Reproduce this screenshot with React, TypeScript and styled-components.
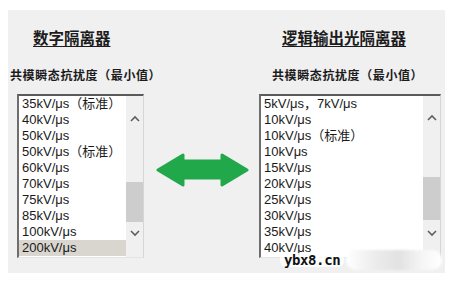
import React from "react";
import styled, { createGlobalStyle } from "styled-components";

const GlobalStyle = createGlobalStyle`
  html, body {
    margin: 0;
    padding: 0;
    background: #ffffff;
  }
  body {
    width: 461px;
    height: 288px;
    overflow: hidden;
    font-family: "Liberation Sans", "Noto Sans CJK SC", sans-serif;
  }
`;

const Page = styled.div`
  padding: 10px 16px 15px 8px;
`;

const Panel = styled.div`
  position: relative;
  display: flex;
  width: 437px;
  height: 263px;
  box-sizing: border-box;
  padding-top: 17px;
  background: #f0f0f0;
`;

const Column = styled.div<{ $width: number; $left: number }>`
  display: flex;
  flex-direction: column;
  width: ${(p) => p.$width}px;
  margin-left: ${(p) => p.$left}px;
`;

const Title = styled.div<{ $indent: number }>`
  margin-left: ${(p) => p.$indent}px;
  height: 20px;
  font-family: "Noto Sans CJK SC", sans-serif;
  font-size: 15.5px;
  line-height: 20px;
  font-weight: 700;
  color: #1c1c1c;
  text-decoration: underline;
  text-underline-offset: 2px;
  white-space: nowrap;
`;

const Subtitle = styled.div<{ $indent: number }>`
  margin: 19px 0 0 ${(p) => p.$indent}px;
  height: 18px;
  font-family: "Noto Sans CJK SC", sans-serif;
  font-size: 12px;
  line-height: 18px;
  font-weight: 700;
  color: #1c1c1c;
  white-space: nowrap;
  letter-spacing: 0.6px;
`;

const ListBox = styled.div<{ $indent: number; $width: number }>`
  display: flex;
  margin: 10px 0 0 ${(p) => p.$indent}px;
  width: ${(p) => p.$width}px;
  height: 164px;
  box-sizing: border-box;
  border-top: 2px solid #5a5a5a;
  border-left: 2px solid #6e6e6e;
  border-right: 1px solid #d6d6d6;
  border-bottom: 1px solid #e4e4e4;
  background: #ffffff;
`;

const Items = styled.div`
  flex: 1;
  overflow: hidden;
`;

const Item = styled.div<{ $selected?: boolean }>`
  height: 16px;
  padding-left: 3px;
  font-size: 13px;
  line-height: 16px;
  color: #1a1a1a;
  white-space: nowrap;
  background: ${(p) => (p.$selected ? "#d9d6d0" : "transparent")};
`;

const Scrollbar = styled.div`
  display: flex;
  flex-direction: column;
  align-items: center;
  width: 17px;
  background: #f0f0f0;
`;

const Chevron = styled.svg<{ $top: number }>`
  display: block;
  margin-top: ${(p) => p.$top}px;
`;

const Thumb = styled.div<{ $top: number; $height: number }>`
  margin-top: ${(p) => p.$top}px;
  width: 17px;
  height: ${(p) => p.$height}px;
  background: #cdcdcd;
`;

const ArrowCell = styled.div`
  display: flex;
  justify-content: center;
  align-items: flex-start;
  padding-top: 126px;
  width: 113px;
`;

const Watermark = styled.div`
  position: absolute;
  left: 272px;
  top: 240px;
  display: flex;
  align-items: center;
  gap: 2px;
`;

const MarkText = styled.span`
  padding: 0 4px;
  background: rgba(255, 255, 255, 0.85);
  border-radius: 6px;
  font-family: "DejaVu Sans Mono", "Liberation Mono", monospace;
  font-size: 14px;
  line-height: 14px;
  font-weight: 700;
  color: #111111;
  letter-spacing: -0.4px;
`;

const Blur = styled.div`
  width: 96px;
  height: 20px;
  border-radius: 10px;
  background: linear-gradient(90deg, #ffffff 0%, #ececec 30%, #e2e2e2 55%, #f6f6f6 80%, #ffffff 100%);
  filter: blur(1px);
`;

const leftItems = [
  "35kV/μs（标准）",
  "40kV/μs",
  "50kV/μs",
  "50kV/μs（标准）",
  "60kV/μs",
  "70kV/μs",
  "75kV/μs",
  "85kV/μs",
  "100kV/μs",
  "200kV/μs",
];

const rightItems = [
  "5kV/μs，7kV/μs",
  "10kV/μs",
  "10kV/μs（标准）",
  "10kVμs",
  "15kV/μs",
  "20kV/μs",
  "25kV/μs",
  "30kV/μs",
  "35kV/μs",
  "40kV/μs",
];

const Up = ({ top }: { top: number }) => (
  <Chevron $top={top} width="10" height="10" viewBox="0 0 10 10">
    <path d="M1 7 L5 3 L9 7" fill="none" stroke="#5f5f5f" strokeWidth="1.6" />
  </Chevron>
);

const Down = ({ top }: { top: number }) => (
  <Chevron $top={top} width="10" height="10" viewBox="0 0 10 10">
    <path d="M1 3 L5 7 L9 3" fill="none" stroke="#5f5f5f" strokeWidth="1.6" />
  </Chevron>
);

const List: React.FC<{
  items: string[];
  selected?: number;
  indent: number;
  width: number;
  thumbTop: number;
  thumbHeight: number;
  upTop: number;
  downTop: number;
}> = (props) => (
  <ListBox $indent={props.indent} $width={props.width}>
    <Items>
      {props.items.map((t, i) => (
        <Item key={i} $selected={i === props.selected}>
          {t}
        </Item>
      ))}
    </Items>
    <Scrollbar>
      <Up top={props.upTop} />
      <Thumb $top={props.thumbTop} $height={props.thumbHeight} />
      <Down top={props.downTop} />
    </Scrollbar>
  </ListBox>
);

const DoubleArrow = () => (
  <svg width="94" height="34" viewBox="0 0 94 34">
    <path
      d="M2 17 L27 2 L27 8 L66 8 L66 2 L91 17 L66 32 L66 25 L27 25 L27 32 Z"
      fill="#21a84a"
      stroke="#21a84a"
      strokeWidth="3"
      strokeLinejoin="round"
    />
  </svg>
);

export default function App() {
  return (
    <Page>
      <GlobalStyle />
      <Panel>
        <Column $width={136} $left={2}>
          <Title $indent={23}>数字隔离器</Title>
          <Subtitle $indent={0}>共模瞬态抗扰度（最小值）</Subtitle>
          <List
            items={leftItems}
            selected={9}
            indent={7}
            width={127}
            upTop={18}
            thumbTop={58}
            thumbHeight={40}
            downTop={6}
          />
        </Column>
        <ArrowCell>
          <DoubleArrow />
        </ArrowCell>
        <Column $width={182} $left={0}>
          <Title $indent={23}>逻辑输出光隔离器</Title>
          <Subtitle $indent={13}>共模瞬态抗扰度（最小值）</Subtitle>
          <List
            items={rightItems}
            indent={0}
            width={182}
            upTop={17}
            thumbTop={54}
            thumbHeight={43}
            downTop={8}
          />
        </Column>
        <Watermark>
          <MarkText>ybx8.cn</MarkText>
          <Blur />
        </Watermark>
      </Panel>
    </Page>
  );
}
